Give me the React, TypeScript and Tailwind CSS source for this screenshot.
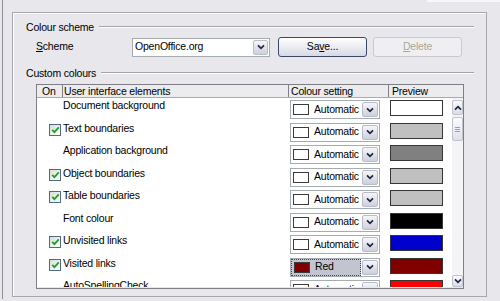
import React from 'react';

type Row = {
  label: string;
  on: boolean;
  setting: string;
  swatch: string;
  preview: string;
  focused?: boolean;
};

const rows: Row[] = [
  { label: 'Document background', on: false, setting: 'Automatic', swatch: '#ffffff', preview: '#ffffff' },
  { label: 'Text boundaries', on: true, setting: 'Automatic', swatch: '#ffffff', preview: '#c0c0c0' },
  { label: 'Application background', on: false, setting: 'Automatic', swatch: '#ffffff', preview: '#808080' },
  { label: 'Object boundaries', on: true, setting: 'Automatic', swatch: '#ffffff', preview: '#c0c0c0' },
  { label: 'Table boundaries', on: true, setting: 'Automatic', swatch: '#ffffff', preview: '#c0c0c0' },
  { label: 'Font colour', on: false, setting: 'Automatic', swatch: '#ffffff', preview: '#000000' },
  { label: 'Unvisited links', on: true, setting: 'Automatic', swatch: '#ffffff', preview: '#0000cc' },
  { label: 'Visited links', on: true, setting: 'Red', swatch: '#800000', preview: '#800000', focused: true },
  { label: 'AutoSpellingCheck', on: false, setting: 'Automatic', swatch: '#ffffff', preview: '#ff0000' },
];

function Chevron({ up = false }: { up?: boolean }) {
  return (
    <svg width="8" height="6" viewBox="0 0 8 6" className={up ? 'rotate-180' : ''}>
      <path d="M1 1.3 L4 4.3 L7 1.3" fill="none" stroke="#1e2740" strokeWidth="1.7" />
    </svg>
  );
}

function DropButton({ w = 'w-[16px]' }: { w?: string }) {
  return (
    <div
      className={`${w} h-[15px] flex items-center justify-center rounded-[2px] border border-[#b9bccb] bg-linear-to-b from-[#f6f6fa] to-[#cdcfdb]`}
    >
      <Chevron />
    </div>
  );
}

function Checkbox() {
  return (
    <div className="w-[12px] h-[12px] border border-[#4f6a86] bg-linear-to-br from-[#dcdcd6] to-white flex items-center justify-center">
      <svg width="9" height="8" viewBox="0 0 9 8">
        <path d="M1.2 3.8 L3.4 6.2 L7.8 1.4" fill="none" stroke="#21a121" strokeWidth="1.8" />
      </svg>
    </div>
  );
}

function SectionTitle({ text }: { text: string }) {
  return (
    <div className="flex items-center h-[14px] gap-[5px]">
      <span className="leading-[14px] whitespace-nowrap">{text}</span>
      <div className="flex-1 h-[2px] border-t border-[#a3a3ab] border-b border-b-white" />
    </div>
  );
}

function ScrollBtn({ up = false, h }: { up?: boolean; h: string }) {
  return (
    <div
      className={`${h} w-[11px] flex items-center justify-center rounded-[2px] border border-[#bfc2cf] bg-linear-to-b from-[#fbfbfd] to-[#dcdde5]`}
    >
      <Chevron up={up} />
    </div>
  );
}

export default function App() {
  return (
    <div className="w-[500px] h-[301px] overflow-hidden bg-[#e7e7ec] text-black text-[10.5px] tracking-[-0.2px] font-['Liberation_Sans',Arial,sans-serif]">
      <div className="h-[2px] ml-[427px] bg-[#f7f7f9]" />
      <div className="flex h-[299px] -mt-[2px]">
        <div className="w-[2px]" />
        <div className="w-px bg-[#8f8f97]" />
        <div className="pl-[9px] pt-[12px]">
          <div className="w-[475px] h-[285px] border border-[#a7a7ae] shadow-[inset_1px_1px_0_#ffffff] pl-[13px] pr-[12px] pt-[7px]">
            <SectionTitle text="Colour scheme" />

            <div className="mt-[3px] h-[20px] flex items-center">
              <div className="w-[106px] pl-[10px]">
                <span className="underline">S</span>cheme
              </div>
              <div className="w-[138px] h-[19px] border border-[#a5acb2] bg-white flex items-center pl-[2px] pr-px">
                <span className="flex-1">OpenOffice.org</span>
                <DropButton w="w-[15px]" />
              </div>
              <button className="ml-[8px] w-[89px] h-[20px] rounded-[3px] border border-[#3a4766] bg-linear-to-b from-white to-[#d9d9e4] text-center">
                Sa<span className="underline">v</span>e...
              </button>
              <button className="ml-[6px] w-[89px] h-[20px] rounded-[3px] border border-[#c9c9cf] bg-[#efeff2] text-[#aca899] text-center">
                <span className="underline">D</span>elete
              </button>
            </div>

            <div className="mt-[9px]">
              <SectionTitle text="Custom colours" />
            </div>

            <div className="mt-[4px] ml-[10px] w-[428px] h-[205px] border border-[#7f7f87] flex flex-col">
              <div className="h-[13px] flex border-b border-[#a9a9b0] bg-[#ececef] leading-[12px]">
                <div className="w-[25px] pl-[5px]">On</div>
                <div className="w-[226px] border-l border-[#808088] pl-[1px]">User interface elements</div>
                <div className="w-[100px] border-l border-[#808088] pl-[2px]">Colour setting</div>
                <div className="flex-1 border-l border-[#808088] pl-[3px]">Preview</div>
              </div>

              <div className="flex h-[189px] bg-white">
                <div className="w-[415px] overflow-hidden">
                  {rows.map((r) => (
                    <div key={r.label} className="h-[22.5px] flex items-start">
                      <div className="w-[26px] pl-[12px] pt-[3px]">{r.on && <Checkbox />}</div>
                      <div className="w-[227px] pt-[1px] leading-[13px]">{r.label}</div>
                      <div className="mt-[2px] w-[90px] h-[19px] border border-[#a5acb2] bg-white flex items-center pr-px">
                        {r.focused ? (
                          <div className="flex-1 h-[17px] flex items-center pl-[2px] bg-[#c2c5d0] border border-dotted border-[#4a4a4a]">
                            <div className="w-[16px] h-[11px] border border-[#3c3c3c]" style={{ backgroundColor: r.swatch }} />
                            <span className="ml-[5px]">{r.setting}</span>
                          </div>
                        ) : (
                          <div className="flex-1 flex items-center pl-[2px]">
                            <div className="w-[16px] h-[11px] border border-[#3c3c3c]" style={{ backgroundColor: r.swatch }} />
                            <span className="ml-[5px]">{r.setting}</span>
                          </div>
                        )}
                        <div className="ml-px">
                          <DropButton />
                        </div>
                      </div>
                      <div
                        className="ml-[10px] mt-[2px] w-[53px] h-[16px] border border-[#363636]"
                        style={{ backgroundColor: r.preview }}
                      />
                    </div>
                  ))}
                </div>

                <div className="w-[11px] flex flex-col pt-[2px] bg-[#f4f4f6]">
                  <ScrollBtn up h="h-[15px]" />
                  <div className="mt-[2px] h-[24px] w-[11px] rounded-[2px] border border-[#bfc2cf] bg-linear-to-b from-[#fbfbfd] to-[#e0e1e8] flex flex-col items-center justify-center gap-px">
                    <div className="w-[5px] h-px bg-[#9c9eab]" />
                    <div className="w-[5px] h-px bg-[#9c9eab]" />
                    <div className="w-[5px] h-px bg-[#9c9eab]" />
                  </div>
                  <div className="flex-1" />
                  <ScrollBtn h="h-[12px]" />
                </div>
              </div>
            </div>
          </div>
        </div>
      </div>
    </div>
  );
}
